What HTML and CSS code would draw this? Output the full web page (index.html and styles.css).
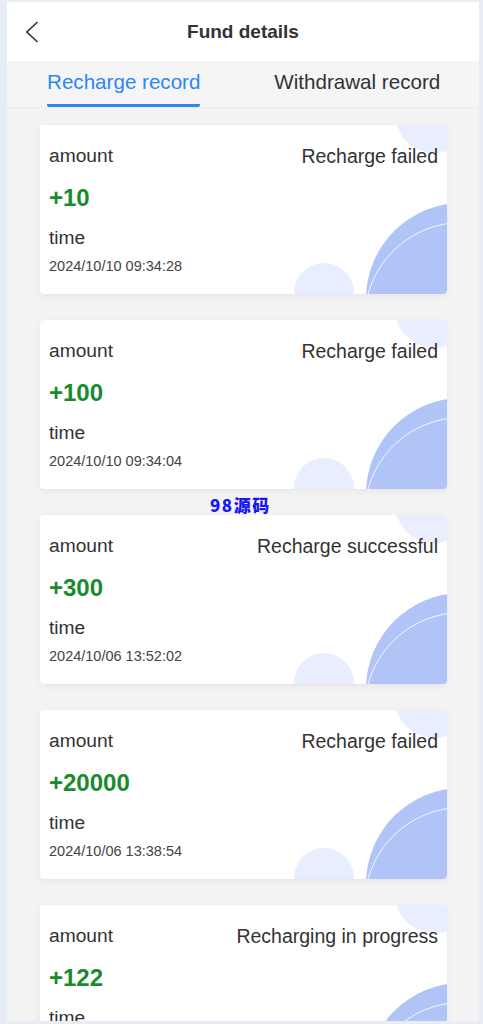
FILE: index.html
```html
<!DOCTYPE html>
<html lang="en">
<head>
<meta charset="utf-8">
<title>Fund details</title>
<link rel="stylesheet" href="styles.css">
</head>
<body>
<div class="app">
  <header class="nav">
    <svg class="back" width="14" height="22" viewBox="0 0 14 22"><polyline points="12.5,1 1.8,11 12.5,21" fill="none" stroke="#333" stroke-width="1.6" stroke-linejoin="miter"/></svg>
    <h1 class="title">Fund details</h1>
  </header>
  <nav class="tabs">
    <div class="tab active"><span class="tab-label">Recharge record</span></div>
    <div class="tab"><span class="tab-label">Withdrawal record</span></div>
  </nav>
  <main class="list">
    <div class="card">
      <span class="deco deco-top"></span><span class="deco deco-small"></span><span class="deco deco-big"></span><span class="deco deco-ring"></span>
      <div class="row"><span class="label">amount</span><span class="status">Recharge failed</span></div>
      <div class="amount">+10</div>
      <div class="label time">time</div>
      <div class="date">2024/10/10 09:34:28</div>
    </div>
    <div class="card">
      <span class="deco deco-top"></span><span class="deco deco-small"></span><span class="deco deco-big"></span><span class="deco deco-ring"></span>
      <div class="row"><span class="label">amount</span><span class="status">Recharge failed</span></div>
      <div class="amount">+100</div>
      <div class="label time">time</div>
      <div class="date">2024/10/10 09:34:04</div>
    </div>
    <div class="card">
      <span class="deco deco-top"></span><span class="deco deco-small"></span><span class="deco deco-big"></span><span class="deco deco-ring"></span>
      <div class="row"><span class="label">amount</span><span class="status">Recharge successful</span></div>
      <div class="amount">+300</div>
      <div class="label time">time</div>
      <div class="date">2024/10/06 13:52:02</div>
    </div>
    <div class="card">
      <span class="deco deco-top"></span><span class="deco deco-small"></span><span class="deco deco-big"></span><span class="deco deco-ring"></span>
      <div class="row"><span class="label">amount</span><span class="status">Recharge failed</span></div>
      <div class="amount">+20000</div>
      <div class="label time">time</div>
      <div class="date">2024/10/06 13:38:54</div>
    </div>
    <div class="card">
      <span class="deco deco-top"></span><span class="deco deco-small"></span><span class="deco deco-big"></span><span class="deco deco-ring"></span>
      <div class="row"><span class="label">amount</span><span class="status">Recharging in progress</span></div>
      <div class="amount">+122</div>
      <div class="label time">time</div>
      <div class="date">2024/10/06 13:30:11</div>
    </div>
  </main>
  <div class="watermark">98源码</div>
</div>
</body>
</html>
```
FILE: styles.css
```css
html, body {
  margin: 0;
  padding: 0;
  background: #e8ecf4;
  height: 1024px;
  overflow: hidden;
}
body {
  font-family: "Liberation Sans", Arial, sans-serif;
  color: #333;
}
.app {
  position: relative;
  margin: 2px 4px 0 7px;
  height: 1019px;
  background: #f3f3f3;
  overflow: hidden;
}
.nav {
  position: relative;
  height: 59px;
  background: #fff;
  display: flex;
  align-items: center;
  justify-content: center;
}
.back {
  position: absolute;
  left: 18px;
  top: 19px;
}
.title {
  margin: 0;
  font-size: 19px;
  font-weight: bold;
  line-height: 59px;
  color: #333;
}
.tabs {
  display: flex;
  height: 46px;
  background: #f5f5f5;
  border-bottom: 1px solid #ebebeb;
  padding-right: 5px;
}
.tab {
  flex: 1;
  display: flex;
  justify-content: center;
}
.tab-label {
  box-sizing: border-box;
  height: 46px;
  padding-top: 9px;
  line-height: 24px;
  font-size: 20.6px;
  color: #333;
  border-bottom: 3px solid transparent;
}
.tab.active .tab-label {
  color: #2d86f4;
  border-bottom-color: #2d86f4;
  border-radius: 0 0 2px 2px;
}
.list {
  display: flex;
  flex-direction: column;
  gap: 26px;
  padding: 17px 32px 0 33px;
}
.card {
  position: relative;
  overflow: hidden;
  background: #fff;
  border-radius: 4px;
  box-shadow: 0 2px 6px rgba(0, 0, 0, 0.06);
  padding: 20px 9px 19px 9px;
  height: 169px;
  box-sizing: border-box;
  flex-shrink: 0;
}
.deco {
  position: absolute;
  border-radius: 50%;
}
.deco-top {
  left: 355px;
  top: -50px;
  width: 78px;
  height: 78px;
  background: #e8eefe;
}
.deco-small {
  left: 254px;
  top: 138px;
  width: 60px;
  height: 60px;
  background: #e8eefe;
}
.deco-big {
  left: 326px;
  top: 78px;
  width: 192px;
  height: 192px;
  background: #b1c4f8;
}
.deco-ring {
  left: 324px;
  top: 97px;
  width: 196px;
  height: 196px;
  box-sizing: border-box;
  border: 1.5px solid rgba(255, 255, 255, 0.85);
}
.row {
  position: relative;
  display: flex;
  justify-content: space-between;
  line-height: 22px;
}
.label, .status {
  position: relative;
  font-size: 19.2px;
  line-height: 22px;
  color: #333;
}
.status {
  font-size: 19.5px;
}
.amount {
  position: relative;
  margin-top: 17px;
  font-size: 24px;
  line-height: 28px;
  font-weight: bold;
  color: #1a8b2d;
}
.time {
  display: block;
  margin-top: 15px;
}
.date {
  position: relative;
  margin-top: 8px;
  font-size: 14.5px;
  line-height: 18px;
  color: #444;
}
.watermark {
  position: absolute;
  left: 203px;
  top: 493px;
  font-family: "Noto Sans CJK SC", sans-serif;
  font-weight: 900;
  font-size: 17px;
  line-height: 20px;
  letter-spacing: 1.5px;
  color: #1717f5;
}
```
